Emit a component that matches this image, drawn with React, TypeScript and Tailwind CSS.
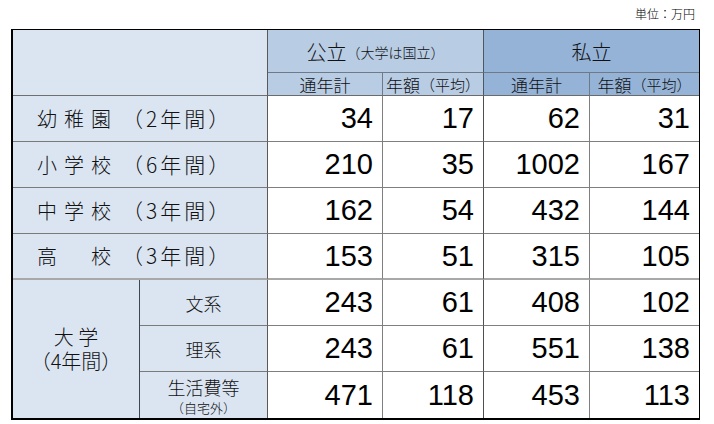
import React from 'react';

const jp = { fontFamily: '"Noto Sans CJK JP", "Noto Sans", sans-serif' };
const num = { fontFamily: '"Liberation Sans", Arial, sans-serif' };

interface Row {
    chars: string[];
    term: string;
    values: number[];
}

const schoolRows: Row[] = [
    { chars: ['幼', '稚', '園'], term: '（2年間）', values: [34, 17, 62, 31] },
    { chars: ['小', '学', '校'], term: '（6年間）', values: [210, 35, 1002, 167] },
    { chars: ['中', '学', '校'], term: '（3年間）', values: [162, 54, 432, 144] },
    { chars: ['高', '', '校'], term: '（3年間）', values: [153, 51, 315, 105] },
];

const univRows = [
    { label: '文系', values: [243, 61, 408, 102] },
    { label: '理系', values: [243, 61, 551, 138] },
    { label: '生活費等', sub: '（自宅外）', values: [471, 118, 453, 113] },
];

const NumCell = ({ v, col, last, thick }: { v: number; col: number; last: boolean; thick?: boolean }) => (
    <div
        className={`bg-white flex items-center justify-end pr-[9px] text-[29px] font-normal text-black leading-none ${
            col < 3 ? (col === 1 ? 'border-r border-r-[#4f4f4f]' : 'border-r border-r-[#7f7f7f]') : ''
        } ${last ? '' : thick ? 'border-b-2 border-b-[#a8a8a8]' : 'border-b border-b-[#7f7f7f]'}`}
        style={num}
    >
        {v}
    </div>
);

export default function App() {
    return (
        <div className="w-[714px] h-[424px] bg-white pl-[11px] font-light" style={jp}>
            <div className="h-[29px] w-[689px] flex justify-end items-start pt-[6px] pr-[5px] text-[12px] text-black leading-[16px]">
                単位：万円
            </div>
            <div className="w-[689px] grid grid-cols-[127px_128px_115px_101px_106px_109px] grid-rows-[43px_23px_repeat(7,46px)] border-l-2 border-t border-r border-b-2 border-black text-[#111]">
                {/* header */}
                <div className="col-span-2 row-span-2 bg-[#dbe5f1] border-r border-r-[#595959] border-b border-b-[#6f6f6f]" />
                <div className="col-span-2 bg-[#b8cce4] border-r border-r-[#4f5660] border-b border-b-[#6f7a88] flex items-center justify-center pt-[2px]">
                    <span className="text-[20px]">公立</span>
                    <span className="text-[14px]">（大学は国立）</span>
                </div>
                <div className="col-span-2 bg-[#95b3d7] border-b border-b-[#6f7a88] flex items-center justify-center text-[20px] pt-[2px]">
                    私立
                </div>
                <div className="bg-[#b8cce4] border-r border-r-[#6f7a88] border-b border-b-[#6b6b6b] flex items-center justify-center text-[17px] leading-none">
                    通年計
                </div>
                <div className="bg-[#b8cce4] border-r border-r-[#4f5660] border-b border-b-[#6b6b6b] flex items-center justify-center leading-none">
                    <span className="text-[17px]">年額</span>
                    <span className="text-[15px]">（平均）</span>
                </div>
                <div className="bg-[#95b3d7] border-r border-r-[#6f7a88] border-b border-b-[#6b6b6b] flex items-center justify-center text-[17px] leading-none">
                    通年計
                </div>
                <div className="bg-[#95b3d7] border-b border-b-[#6b6b6b] flex items-center justify-center leading-none">
                    <span className="text-[17px]">年額</span>
                    <span className="text-[15px]">（平均）</span>
                </div>

                {/* schools */}
                {schoolRows.map((r, i) => (
                    <React.Fragment key={i}>
                        <div
                            className={`col-span-2 bg-[#dbe5f1] border-r border-r-[#595959] flex items-center pl-[24px] text-[20px] whitespace-nowrap ${
                                i === 3 ? 'border-b-2 border-b-[#a8a8a8]' : 'border-b border-b-[#7a7a7a]'
                            }`}
                        >
                            {r.chars.map((c, j) => (
                                <span key={j} className="inline-block w-[27px]">
                                    {c}
                                </span>
                            ))}
                            <span className="ml-[4px] text-[21px] tracking-[3px]">{r.term}</span>
                        </div>
                        {r.values.map((v, j) => (
                            <NumCell key={j} v={v} col={j} last={false} thick={i === 3} />
                        ))}
                    </React.Fragment>
                ))}

                {/* university */}
                <div className="row-span-3 bg-[#dbe5f1] border-r border-r-[#3f4650] flex flex-col items-center justify-center text-[20px] leading-[24px]">
                    <span>大 学</span>
                    <span>（4年間）</span>
                </div>
                {univRows.map((r, i) => (
                    <React.Fragment key={i}>
                        <div
                            className={`bg-[#dbe5f1] border-r border-r-[#595959] flex flex-col items-center justify-center ${
                                i < 2 ? 'border-b border-b-[#7a7a7a]' : ''
                            }`}
                        >
                            <span className="text-[18px] leading-[24px]">{r.label}</span>
                            {r.sub && <span className="text-[13px] leading-[17px]">{r.sub}</span>}
                        </div>
                        {r.values.map((v, j) => (
                            <NumCell key={j} v={v} col={j} last={i === 2} />
                        ))}
                    </React.Fragment>
                ))}
            </div>
        </div>
    );
}
